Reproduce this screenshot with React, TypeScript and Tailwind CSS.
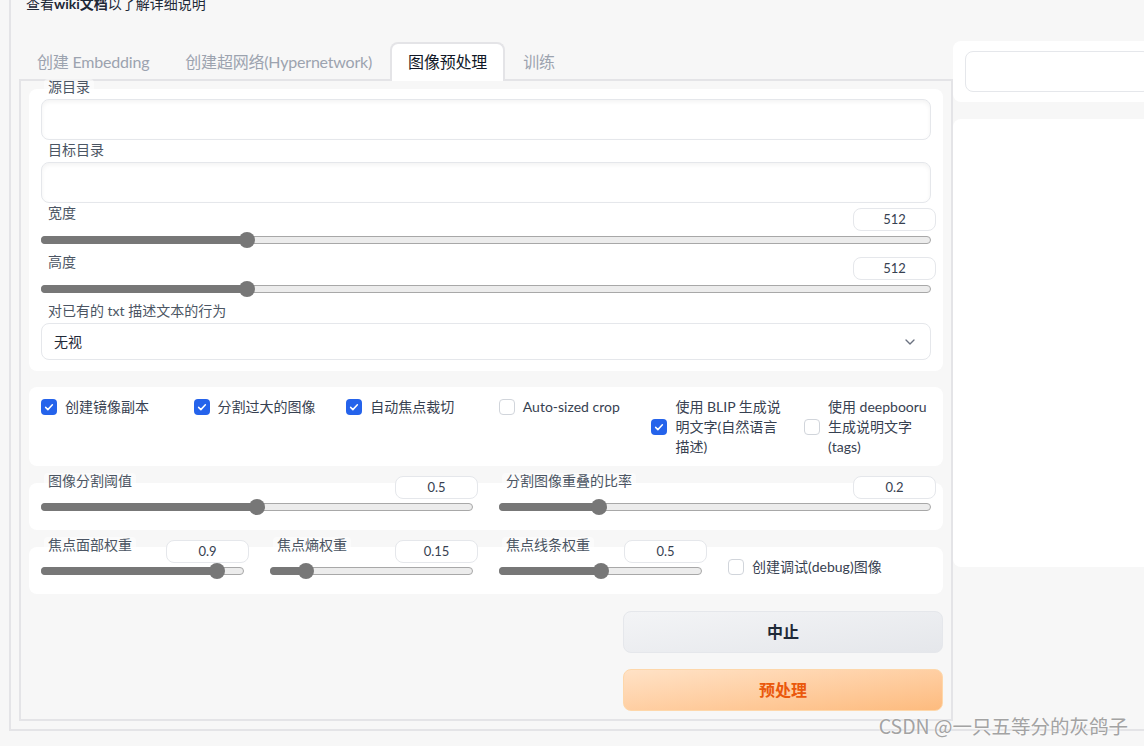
import { ChevronDown } from "lucide-react";

const tabs = ["创建 Embedding", "创建超网络(Hypernetwork)", "图像预处理", "训练"];

function Label({ text, className = "" }: { text: string; className?: string }) {
  return (
    <span
      className={`ml-[3px] self-start rounded-sm bg-white/50 px-1 text-sm leading-4 text-[#4b5563] ${className}`}
    >
      {text}
    </span>
  );
}

function NumBox({ value }: { value: string }) {
  return (
    <div className="-mr-[5px] h-[23px] w-[83px] rounded-lg border border-[#e5e7eb] bg-white text-center text-[13px] leading-[21px] text-[#374151]">
      {value}
    </div>
  );
}

function Slider({ p }: { p: number }) {
  return (
    <div className="relative h-4 w-full">
      <div className="absolute inset-x-0 top-1 h-2 rounded-full border border-[#a8a8a8] bg-[#ececec]" />
      <div
        className="absolute left-0 top-1 h-2 rounded-full bg-[#777777]"
        style={{ width: `calc(${p} * (100% - 16px) + 8px)` }}
      />
      <div
        className="absolute top-0 h-4 w-4 rounded-full bg-[#777777]"
        style={{ left: `calc(${p} * (100% - 16px))` }}
      />
    </div>
  );
}

function SliderField({ label, value, p }: { label: string; value: string; p: number }) {
  return (
    <div className="flex flex-col">
      <div className="-mt-[7px] flex h-[23px] items-start justify-between">
        <Label text={label} className="-mt-[3px]" />
        <NumBox value={value} />
      </div>
      <Slider p={p} />
    </div>
  );
}

function Check({ on }: { on: boolean }) {
  return on ? (
    <span className="flex h-4 w-4 shrink-0 items-center justify-center rounded bg-[#2563eb]">
      <svg viewBox="0 0 16 16" className="h-3 w-3" fill="none">
        <path d="M3.5 8.5l3 3 6-6.5" stroke="white" strokeWidth="2" strokeLinecap="round" strokeLinejoin="round" />
      </svg>
    </span>
  ) : (
    <span className="h-4 w-4 shrink-0 rounded border border-[#d1d5db] bg-white" />
  );
}

const checks: { label: string; on: boolean }[] = [
  { label: "创建镜像副本", on: true },
  { label: "分割过大的图像", on: true },
  { label: "自动焦点裁切", on: true },
  { label: "Auto-sized crop", on: false },
  { label: "使用 BLIP 生成说明文字(自然语言描述)", on: true },
  { label: "使用 deepbooru 生成说明文字 (tags)", on: false },
];

export default function App() {
  return (
    <div className="relative h-[746px] w-[1144px] overflow-hidden bg-[#f7f7f7] font-['Lato','Noto_Sans_CJK_SC',sans-serif]">
      <div className="ml-[9px] w-[1200px] border-b-2 border-l-2 border-[#e4e4e7] pb-2 pl-2">
        <div className="flex h-[42px] items-start">
          <p className="-mt-[6px] ml-[7px] text-sm leading-5 text-[#1f2937]">
            查看<b>wiki文档</b>以了解详细说明
          </p>
        </div>

        <div className="flex items-start">
          {/* left: tabs + panel */}
          <div className="w-[934px]">
            <div className="relative z-10 flex h-[37px] items-end">
              {tabs.map((t) => {
                const active = t === "图像预处理";
                return (
                  <div
                    key={t}
                    className={`-mb-[2px] flex h-[39px] items-center rounded-t-lg border-2 border-b-0 px-4 pb-[2px] text-base tracking-[-0.2px] ${
                      active
                        ? "border-[#e4e4e7] bg-white text-[#111827]"
                        : "border-transparent text-[#9ca3af]"
                    }`}
                  >
                    {t}
                  </div>
                );
              })}
            </div>

            <div className="border-2 border-[#e4e4e7] p-2">
              {/* card 1 */}
              <div className="flex flex-col rounded-lg bg-white px-3 pb-[11px]">
                <Label text="源目录" className="-mt-[10px]" />
                <div className="mt-1 h-[41px] rounded-lg border border-[#e5e7eb] bg-white shadow-[inset_0_2px_4px_rgba(0,0,0,0.05)]" />
                <Label text="目标目录" className="mt-[2px]" />
                <div className="mt-1 h-[41px] rounded-lg border border-[#e5e7eb] bg-white shadow-[inset_0_2px_4px_rgba(0,0,0,0.05)]" />
                <div className="mt-[5px] flex h-[23px] items-start justify-between">
                  <Label text="宽度" className="-mt-[3px]" />
                  <NumBox value="512" />
                </div>
                <div className="mt-[1px]">
                  <Slider p={0.226} />
                </div>
                <div className="mt-[9px] flex h-[23px] items-start justify-between">
                  <Label text="高度" className="-mt-[3px]" />
                  <NumBox value="512" />
                </div>
                <div className="mt-[1px]">
                  <Slider p={0.226} />
                </div>
                <Label text="对已有的 txt 描述文本的行为" className="mt-[6px]" />
                <div className="mt-1 flex h-[37px] items-center justify-between rounded-lg border border-[#e5e7eb] bg-white pl-3 pr-3">
                  <span className="text-sm text-[#1f2937]">无视</span>
                  <ChevronDown size={16} strokeWidth={2} className="text-[#6b7280]" />
                </div>
              </div>

              {/* card 2: checkboxes */}
              <div className="mt-4 grid grid-cols-6 gap-x-[25.6px] rounded-lg bg-white px-3 pb-[9px] pt-[10px]">
                {checks.map((c) => (
                  <div key={c.label} className="flex items-center gap-2 self-start">
                    <Check on={c.on} />
                    <span className="w-[108px] shrink-0 text-sm leading-5 text-[#374151]">{c.label}</span>
                  </div>
                ))}
              </div>

              {/* card 3 */}
              <div className="mt-[17px] grid grid-cols-2 gap-x-[26px] rounded-lg bg-white px-3 pb-[15px]">
                <SliderField label="图像分割阈值" value="0.5" p={0.5} />
                <SliderField label="分割图像重叠的比率" value="0.2" p={0.222} />
              </div>

              {/* card 4 */}
              <div className="mt-[17px] grid grid-cols-4 gap-x-[26px] rounded-lg bg-white px-3 pb-[15px]">
                <SliderField label="焦点面部权重" value="0.9" p={0.9} />
                <SliderField label="焦点熵权重" value="0.15" p={0.15} />
                <SliderField label="焦点线条权重" value="0.5" p={0.5} />
                <div className="mt-[10px] flex items-center gap-2 self-start">
                  <Check on={false} />
                  <span className="text-sm leading-5 text-[#374151]">创建调试(debug)图像</span>
                </div>
              </div>

              {/* buttons */}
              <div className="mt-[17px] flex flex-col items-end gap-4">
                <button className="h-[42px] w-[320px] rounded-lg border border-[#e5e7eb] bg-gradient-to-br from-[#f3f4f6] to-[#e5e7eb] text-base font-bold text-[#1f2937]">
                  中止
                </button>
                <button className="h-[42px] w-[320px] rounded-lg border border-[#fed7aa] bg-gradient-to-br from-[#ffe2c6] to-[#fdbb7e] text-base font-bold text-[#ea580c]">
                  预处理
                </button>
              </div>
            </div>
          </div>

          {/* right column */}
          <div className="-mt-px w-[210px]">
            <div className="rounded-lg bg-white px-3 py-[10px]">
              <div className="h-[41px] rounded-lg border border-[#e5e7eb] bg-white" />
            </div>
            <div className="mt-[17px] h-[448px] rounded-lg bg-white" />
          </div>
        </div>
      </div>

      <div className="absolute right-[16px] top-[714px] font-['Noto_Sans_CJK_SC',sans-serif] text-[19.5px] leading-6 text-[#a3a3a3] [text-shadow:0_0_2px_#ffffff]">
        CSDN @一只五等分的灰鸽子
      </div>
    </div>
  );
}
